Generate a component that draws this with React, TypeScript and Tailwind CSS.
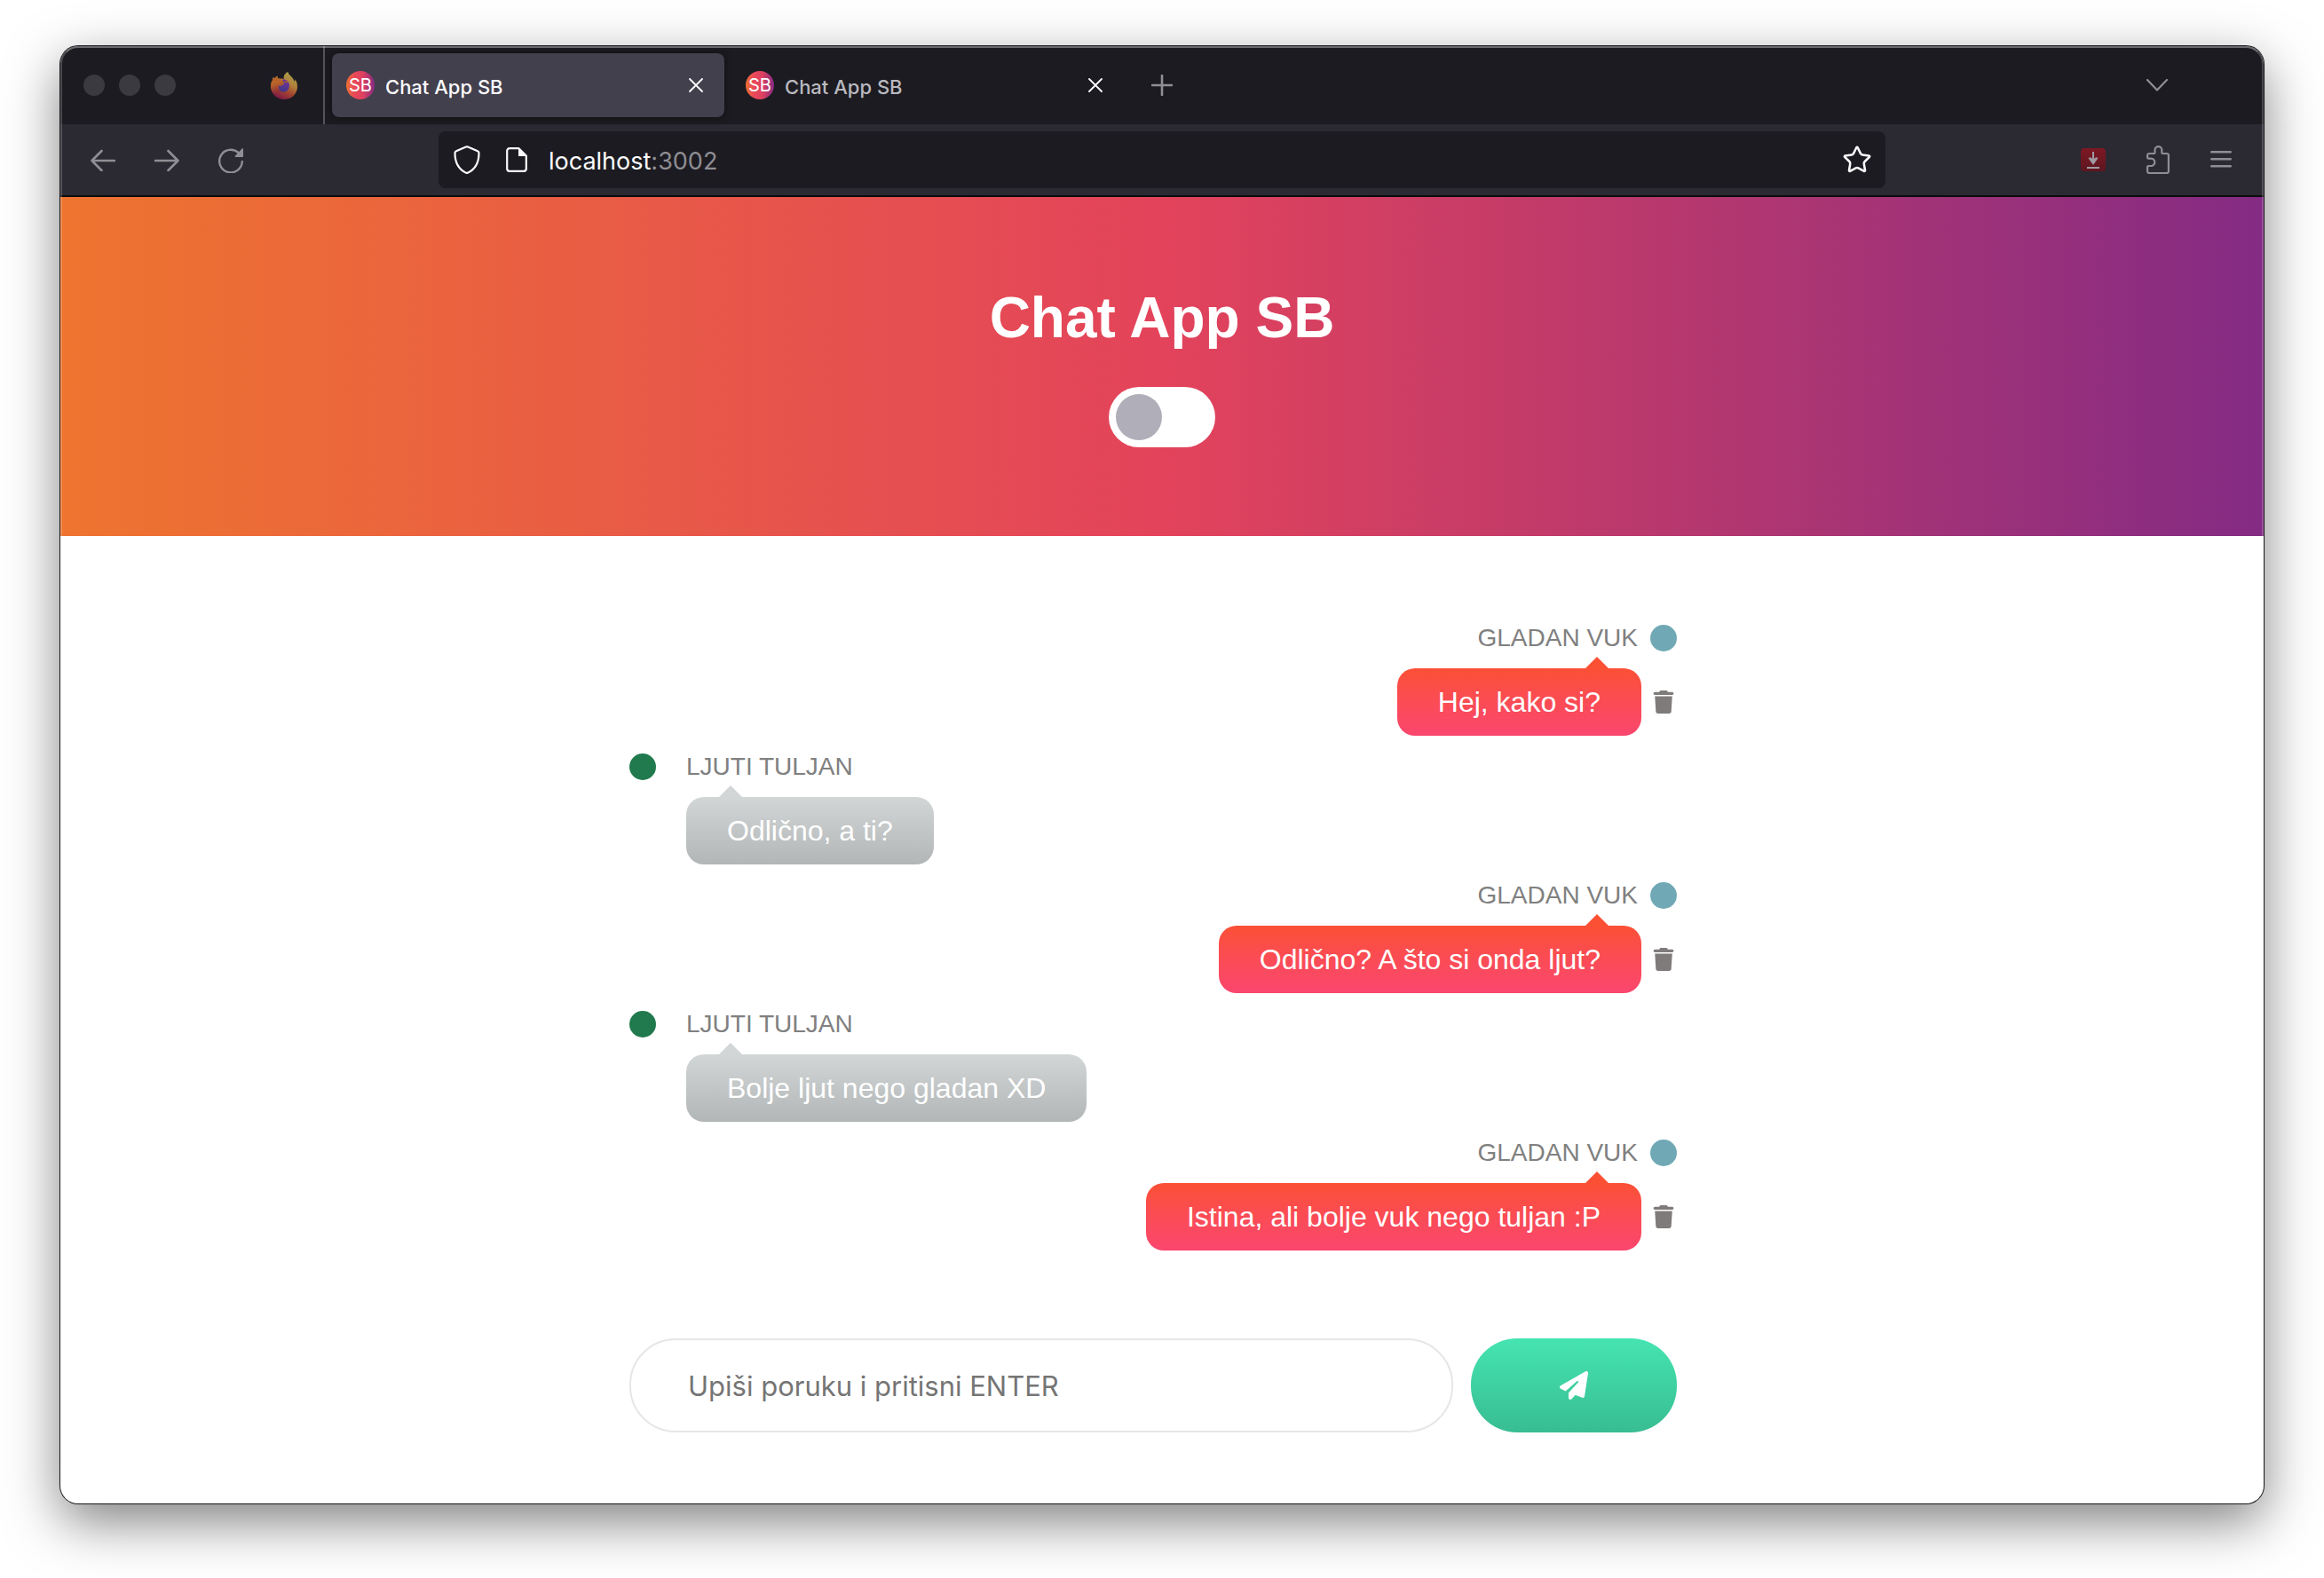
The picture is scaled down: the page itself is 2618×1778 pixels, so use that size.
import { useState } from "react";
import { FaPaperPlane, FaTrash } from "react-icons/fa6";
import { Star } from "lucide-react";

type Message = { id: number; author: string; text: string; own: boolean };

const INITIAL: Message[] = [
  { id: 1, author: "GLADAN VUK", text: "Hej, kako si?", own: true },
  { id: 2, author: "LJUTI TULJAN", text: "Odlično, a ti?", own: false },
  { id: 3, author: "GLADAN VUK", text: "Odlično? A što si onda ljut?", own: true },
  { id: 4, author: "LJUTI TULJAN", text: "Bolje ljut nego gladan XD", own: false },
  { id: 5, author: "GLADAN VUK", text: "Istina, ali bolje vuk nego tuljan :P", own: true },
];

function FirefoxIcon() {
  return (
    <svg width="30" height="31" viewBox="0 0 90 93" aria-hidden="true">
      <defs>
        <linearGradient id="ff-body" x1="0.8" y1="0.1" x2="0.35" y2="1">
          <stop offset="0" stopColor="#a89c48" />
          <stop offset="0.35" stopColor="#b0803a" />
          <stop offset="0.65" stopColor="#a3432f" />
          <stop offset="1" stopColor="#7c1848" />
        </linearGradient>
        <linearGradient id="ff-globe" x1="0.6" y1="0" x2="0.3" y2="1">
          <stop offset="0" stopColor="#74309a" />
          <stop offset="1" stopColor="#3d3a86" />
        </linearGradient>
        <linearGradient id="ff-head" x1="0" y1="0" x2="0.3" y2="1">
          <stop offset="0" stopColor="#b7672a" />
          <stop offset="0.5" stopColor="#b8632a" />
          <stop offset="1" stopColor="#8f2d38" />
        </linearGradient>
      </defs>
      <path
        fill="url(#ff-body)"
        d="M58 0c3 11 12 14 18 24 2 4 3 6 4 9 2-2 2-5 2-8 6 7 8 17 8 25 0 24-20 43-45 43S0 74 0 49c0-9 2-16 6-21 0-4 1-8 3-11 1 2 2 4 4 5 3-4 6-7 10-8-1 4 0 8 3 8l5 1c6-1 10-1 14 3-4-12 4-22 13-26Z"
      />
      <path
        fill="url(#ff-head)"
        d="M0 49c0-9 2-16 6-21 0-4 1-8 3-11 1 2 2 4 4 5 3-4 6-7 10-8-1 4 0 8 3 8 10 2 16 8 19 16-3 4-12 5-17 6-3 5 0 15 6 22-8 6-20 8-28 2-4-6-6-13-6-19Z"
      />
      <path
        fill="url(#ff-globe)"
        d="M38 27c10-5 24 4 25 18 0 13-8 23-19 23s-18-9-17-21c4 2 9 1 11-2 4-3 8-4 8-7-2-5-6-9-8-11Z"
      />
      <path fill="#a8672f" d="M46 32c5-2 10-1 15 4-3-1-6-1-9 1-3-1-5-3-6-5Z" />
    </svg>
  );
}

function Favicon({ id }: { id: string }) {
  return (
    <svg width="32" height="32" viewBox="0 0 32 32" className="shrink-0" aria-hidden="true">
      <defs>
        <linearGradient id={id}>
          <stop offset="0" stopColor="#f07130" />
          <stop offset="0.3" stopColor="#e8485a" />
          <stop offset="0.6" stopColor="#dd4060" />
          <stop offset="1" stopColor="#842b84" />
        </linearGradient>
      </defs>
      <circle cx="16" cy="16" r="16" fill={`url(#${id})`} />
      <text x="16" y="23" textAnchor="middle" fontSize="20" fill="#fff" fontFamily="Inter, sans-serif">
        SB
      </text>
    </svg>
  );
}

function CloseIcon() {
  return (
    <svg width="16" height="16" viewBox="0 0 16 16" fill="none" stroke="currentColor" strokeWidth="1.8" strokeLinecap="round" aria-hidden="true">
      <path d="M1 1l14 14M15 1L1 15" />
    </svg>
  );
}

function Tab({ active, id }: { active?: boolean; id: string }) {
  return (
    <div
      className={
        active
          ? "flex h-[72px] w-[442px] items-center rounded-lg bg-[#43404d] pr-6 pl-4 text-[#fbfbfe] shadow-[0_0_8px_rgba(0,0,0,0.5)]"
          : "ml-2 flex h-[72px] w-[442px] items-center rounded-lg pr-6 pl-4 text-[#b9b9bf]"
      }
    >
      <Favicon id={id} />
      <span className="mt-1 ml-3 flex-1 text-[22px] leading-7 font-medium">Chat App SB</span>
      <button type="button" aria-label="Close tab" className="text-[#fbfbfe]">
        <CloseIcon />
      </button>
    </div>
  );
}

function TabBar() {
  return (
    <div className="flex h-[88px] items-center bg-[#1c1b21] pl-[26px]">
      <div className="flex gap-4">
        <span className="size-6 rounded-full bg-[#3b3a40]" />
        <span className="size-6 rounded-full bg-[#3b3a40]" />
        <span className="size-6 rounded-full bg-[#3b3a40]" />
      </div>
      <div className="ml-[107px]">
        <FirefoxIcon />
      </div>
      <div className="mr-2 ml-[29px] w-0.5 self-stretch bg-[#55545a]" />
      <Tab active id="fav-a" />
      <Tab id="fav-b" />
      <button type="button" aria-label="New tab" className="ml-[31px] text-[#8f8e94]">
        <svg width="24" height="24" viewBox="0 0 24 24" fill="none" stroke="currentColor" strokeWidth="2.6" strokeLinecap="round" aria-hidden="true">
          <path d="M12 1v22M1 12h22" />
        </svg>
      </button>
      <button type="button" aria-label="List all tabs" className="mr-[108px] ml-auto text-[#8f8e94]">
        <svg width="24" height="14" viewBox="0 0 24 14" fill="none" stroke="currentColor" strokeWidth="2.2" strokeLinecap="round" strokeLinejoin="round" aria-hidden="true">
          <path d="M1 1l11 11.5L23 1" />
        </svg>
      </button>
    </div>
  );
}

function NavBar() {
  return (
    <div className="flex h-[82px] items-center border-b-2 border-[#0b0b0d] bg-[#2b2932] pr-9 pl-[34px] text-[#8f8e94]">
      <div className="flex w-[392px] items-center gap-11">
        <button type="button" aria-label="Back">
          <svg width="28" height="26" viewBox="0 0 28 26" fill="none" stroke="currentColor" strokeWidth="2.6" strokeLinecap="round" strokeLinejoin="round" aria-hidden="true">
            <path d="M27 14H1.500M12.500 3L1.500 14l11 11" />
          </svg>
        </button>
        <button type="button" aria-label="Forward">
          <svg width="28" height="26" viewBox="0 0 28 26" fill="none" stroke="currentColor" strokeWidth="2.6" strokeLinecap="round" strokeLinejoin="round" aria-hidden="true">
            <path d="M1 14h25.500M15.500 3l11 11-11 11" />
          </svg>
        </button>
        <button type="button" aria-label="Reload">
          <svg width="28" height="30" viewBox="0 -2 28 30" fill="none" stroke="currentColor" strokeWidth="2.4" strokeLinecap="round" aria-hidden="true">
            <path d="M22.800 5.200A12.800 12.800 0 1 0 26.800 15" />
            <path d="M28 1v8.200a.8.800 0 0 1-.8.800h-7.600a.8.800 0 0 1-.6-1.400l7.600-8.200a.8.800 0 0 1 1.400.6Z" fill="currentColor" stroke="none" />
          </svg>
        </button>
      </div>
      <div className="flex h-16 flex-1 items-center rounded-lg bg-[#1c1b21] pr-[15px] pl-4 text-[#fbfbfe]">
        <svg width="32" height="32" viewBox="0 0 30 32" fill="none" stroke="currentColor" strokeWidth="2.2" strokeLinejoin="round" aria-hidden="true">
          <path d="M13.900 1.600a3 3 0 0 1 2.200 0l11 4.700a2.200 2.200 0 0 1 1.400 2.200C28.500 19 24.500 26.500 16.300 30.600a2.800 2.800 0 0 1-2.600 0C5.500 26.500 1.500 19 1.500 8.500a2.200 2.200 0 0 1 1.400-2.200Z" />
        </svg>
        <svg width="24" height="28" viewBox="0 0 24 28" className="ml-7" fill="none" stroke="currentColor" strokeWidth="2.2" strokeLinejoin="round" aria-hidden="true">
          <path d="M14.500 1.200H4a2.800 2.800 0 0 0-2.800 2.800v20a2.800 2.800 0 0 0 2.800 2.800h16a2.800 2.800 0 0 0 2.800-2.800V9.500Z" />
          <path d="M14 1v9h9Z" fill="currentColor" stroke="none" />
        </svg>
        <p className="mt-[3px] ml-6 flex-1 text-[27px] leading-8 text-[#8f8e94]">
          <span className="text-[#fbfbfe]">localhost</span>:3002
        </p>
        <button type="button" aria-label="Bookmark this page">
          <Star size={34} strokeWidth={1.8} />
        </button>
      </div>
      <div className="ml-[220px] flex items-center">
        <button type="button" aria-label="Downloader">
          <svg width="28" height="26" viewBox="0 0 28 26" aria-hidden="true">
            <defs>
              <linearGradient id="dl-bg" x1="0" y1="0" x2="0" y2="1">
                <stop offset="0" stopColor="#7e1824" />
                <stop offset="1" stopColor="#5c161f" />
              </linearGradient>
            </defs>
            <rect width="28" height="26" rx="4" fill="url(#dl-bg)" />
            <path d="M14 4v12" stroke="#a09ba3" strokeWidth="2" />
            <path d="M9 11.500l1.200-1.300 3.800 2.600 3.800-2.600 1.200 1.300-5 7Z" fill="#a09ba3" stroke="#a09ba3" strokeWidth="0.6" strokeLinejoin="round" />
            <path d="M7 22h14" stroke="#a09ba3" strokeWidth="2.2" />
          </svg>
        </button>
        <button type="button" aria-label="Extensions" className="ml-[46px]">
          <svg width="26" height="32" viewBox="0 0 26 32" fill="none" stroke="currentColor" strokeWidth="2.2" strokeLinejoin="round" aria-hidden="true">
            <path d="M3.100 9h5.400a1 1 0 0 0 1-1V5a3.900 3.900 0 0 1 7.800 0v3a1 1 0 0 0 1 1h4.600a2 2 0 0 1 2 2v18a2 2 0 0 1-2 2H3.100a2 2 0 0 1-2-2v-5a1 1 0 0 1 1-1h3a4.200 4.200 0 0 0 0-8.400h-3a1 1 0 0 1-1-1V11a2 2 0 0 1 2-2Z" />
          </svg>
        </button>
        <button type="button" aria-label="Open application menu" className="ml-[46px]">
          <svg width="24" height="20" viewBox="0 0 24 20" fill="none" stroke="currentColor" strokeWidth="2.400" strokeLinecap="round" aria-hidden="true">
            <path d="M1.200 1.300h21.600M1.200 9.300h21.600M1.200 17.300h21.600" />
          </svg>
        </button>
      </div>
    </div>
  );
}

function Header() {
  const [dark, setDark] = useState(false);
  return (
    <header className="flex flex-col items-center bg-[linear-gradient(to_right,#ee742f,#e3435b_50%,#842b84)] pt-[98px] pb-[100px]">
      <h1 className="text-[64px] leading-[76px] font-bold text-white">Chat App SB</h1>
      <label className="mt-10 flex h-[68px] w-[120px] cursor-pointer items-center rounded-full bg-white p-2 has-checked:justify-end">
        <input
          type="checkbox"
          aria-label="Toggle theme"
          className="sr-only"
          checked={dark}
          onChange={(e) => setDark(e.target.checked)}
        />
        <span className="size-[52px] rounded-full bg-[#b0aeb9]" />
      </label>
    </header>
  );
}

function OwnMessage({ message, onDelete }: { message: Message; onDelete: () => void }) {
  return (
    <li className="flex flex-col items-end">
      <div className="flex items-center gap-3.5">
        <span className="text-[28px] leading-[30px] text-[#808080]">{message.author}</span>
        <span className="size-[30px] rounded-full bg-[#70a9b5]" />
      </div>
      <div className="mt-[19px] flex items-center gap-3">
        <p className="relative rounded-[20px] bg-linear-to-b from-[#fb5034] to-[#fa466e] px-[46px] py-[18px] text-[32px] leading-10 text-white">
          <span className="absolute -top-[13px] right-[37px] border-x-[13px] border-b-[13px] border-x-transparent border-b-[#fb5034]" />
          {message.text}
        </p>
        <button type="button" aria-label="Delete message" onClick={onDelete} className="w-7 text-[#807b7b]">
          <FaTrash size={26} />
        </button>
      </div>
    </li>
  );
}

function OtherMessage({ message }: { message: Message }) {
  return (
    <li className="flex items-start gap-[34px]">
      <span className="size-[30px] rounded-full bg-[#217a4d]" />
      <div className="flex flex-col items-start gap-[19px]">
        <span className="text-[28px] leading-[30px] text-[#808080]">{message.author}</span>
        <p className="relative rounded-[20px] bg-linear-to-b from-[#d2d6d7] to-[#b2b6b7] px-[46px] py-[18px] text-[32px] leading-10 text-white">
          <span className="absolute -top-[13px] left-[37px] border-x-[13px] border-b-[13px] border-x-transparent border-b-[#d2d6d7]" />
          {message.text}
        </p>
      </div>
    </li>
  );
}

function Chat() {
  const [messages, setMessages] = useState(INITIAL);
  const [draft, setDraft] = useState("");
  return (
    <main className="mx-auto max-w-[1200px] pt-[100px] pr-5 pb-20">
      <ul className="flex flex-col gap-5">
        {messages.map((m) =>
          m.own ? (
            <OwnMessage key={m.id} message={m} onDelete={() => setMessages(messages.filter((x) => x.id !== m.id))} />
          ) : (
            <OtherMessage key={m.id} message={m} />
          ),
        )}
      </ul>
      <form
        className="mt-[99px] flex gap-5"
        onSubmit={(e) => {
          e.preventDefault();
          if (!draft.trim()) return;
          setMessages([...messages, { id: Date.now(), author: "GLADAN VUK", text: draft, own: true }]);
          setDraft("");
        }}
      >
        <input
          type="text"
          aria-label="Poruka"
          placeholder="Upiši poruku i pritisni ENTER"
          value={draft}
          onChange={(e) => setDraft(e.target.value)}
          className="h-[106px] min-w-0 flex-1 rounded-[52px] border-2 border-[#e6e6e6] px-16 font-[Inter,sans-serif] text-[31px] text-[#333] outline-none placeholder:text-[#757575]"
        />
        <button
          type="submit"
          aria-label="Pošalji"
          className="flex h-[106px] w-[232px] items-center justify-center rounded-[52px] bg-linear-to-b from-[#45e4b1] to-[#38bd92] text-white"
        >
          <FaPaperPlane size={32} />
        </button>
      </form>
    </main>
  );
}

export default function App() {
  return (
    <div className="min-h-screen overflow-hidden bg-white px-[68px] pt-[52px] pb-[84px]">
      <div className="relative overflow-hidden rounded-[20px] bg-white shadow-[0_0_0_1px_#17171a,0_20px_60px_rgba(0,0,0,0.5)]">
        <div className="font-[Inter,sans-serif]">
          <TabBar />
          <NavBar />
        </div>
        <div className="font-['Liberation_Sans',Arial,sans-serif]">
          <Header />
          <Chat />
        </div>
        <div className="pointer-events-none absolute inset-0 rounded-[20px] border-2 border-white/20 border-t-white/35" />
      </div>
    </div>
  );
}
